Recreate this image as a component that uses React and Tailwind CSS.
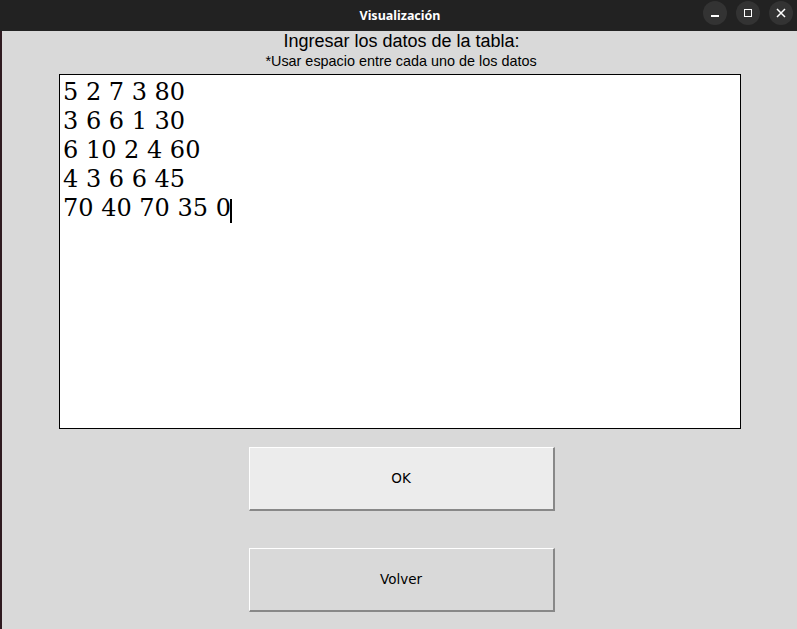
const rows = ['5 2 7 3 80', '3 6 6 1 30', '6 10 2 4 60', '4 3 6 6 45', '70 40 70 35 0'];

export default function App() {
  return (
    <div className="w-[797px] h-[629px] flex flex-col bg-[#d9d9d9] overflow-hidden">
      {/* Title bar */}
      <div className="h-[31px] bg-[#222222] flex items-center relative shrink-0">
        <div className="flex-1 text-center text-white text-[12.5px] font-bold font-['Noto_Sans',sans-serif] pt-[1px] pl-[3px]">
          Visualización
        </div>
        <div className="absolute right-[4px] top-[1px] flex gap-[9px]">
          <div className="w-[24px] h-[24px] rounded-full bg-[#333333] flex items-center justify-center">
            <div className="w-[8px] h-[1.5px] bg-white mt-[6px]" />
          </div>
          <div className="w-[24px] h-[24px] rounded-full bg-[#333333] flex items-center justify-center">
            <div className="w-[8px] h-[8px] border-[1.5px] border-white" />
          </div>
          <div className="w-[24px] h-[24px] rounded-full bg-[#333333] flex items-center justify-center">
            <svg width="10" height="10" viewBox="0 0 10 10">
              <path d="M1 1 L9 9 M9 1 L1 9" stroke="white" strokeWidth="1.5" />
            </svg>
          </div>
        </div>
      </div>

      {/* Body */}
      <div className="flex-1 flex flex-col items-center border-l-2 border-[#2e1a20] font-['Liberation_Sans',sans-serif] text-black">
        <h1 className="text-[18px] leading-[21px] ml-[4px]">Ingresar los datos de la tabla:</h1>
        <p className="text-[14.4px] leading-[17px] mt-[1px] ml-[3px]">*Usar espacio entre cada uno de los datos</p>

        {/* Data entry box */}
        <div className="mt-[4px] ml-[1px] w-[682px] h-[355px] bg-white border border-black pl-[3px] pt-[3px] text-[24px] leading-[29px] font-['DejaVu_Serif',serif] text-black">
          {rows.map((row, i) => (
            <div key={i} className="whitespace-pre">
              {row}
              {i === rows.length - 1 && (
                <span className="inline-block w-[2px] h-[24px] bg-black align-[-7px] -ml-[1px]" />
              )}
            </div>
          ))}
        </div>

        <div className="mt-[18px] ml-[4px] flex flex-col gap-[37px]">
          <button className="w-[306px] h-[64px] bg-[#ececec] border-t border-l border-white border-b-2 border-r-2 border-b-[#888888] border-r-[#888888] text-[13.5px] font-['DejaVu_Sans',sans-serif]">
            OK
          </button>
          <button className="w-[306px] h-[64px] bg-[#d9d9d9] border-t border-l border-white border-b-2 border-r-2 border-b-[#888888] border-r-[#888888] text-[13.5px] font-['DejaVu_Sans',sans-serif]">
            Volver
          </button>
        </div>
      </div>
    </div>
  );
}
